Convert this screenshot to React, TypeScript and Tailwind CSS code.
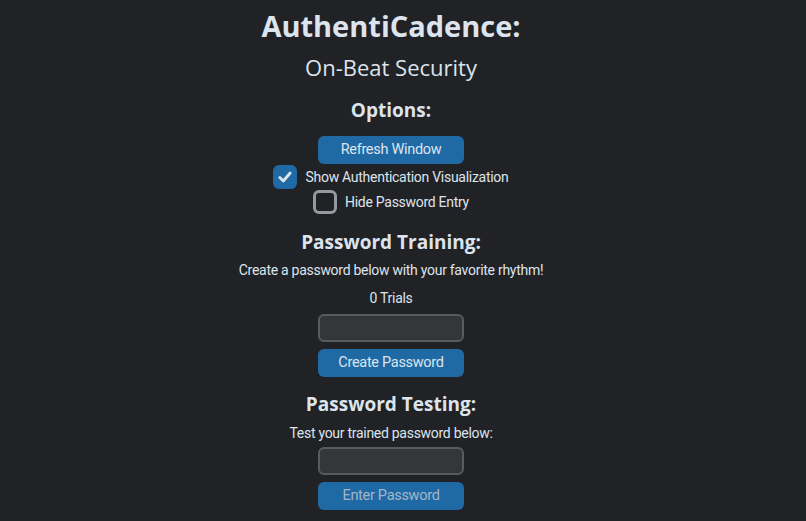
import React, { useState } from "react";

const heading = { fontFamily: '"Open Sans", "Noto Sans", sans-serif' };
const body = { fontFamily: 'Roboto, "Liberation Sans", sans-serif' };

function CheckBox({ checked, label, onToggle }: { checked: boolean; label: string; onToggle: () => void }) {
  return (
    <button type="button" onClick={onToggle} className="flex h-6 items-center gap-2" style={body}>
      {checked ? (
        <span className="flex h-6 w-6 items-center justify-center rounded-[6px] bg-[#1f6aa5]">
          <svg width="16" height="16" viewBox="0 0 16 16" fill="none">
            <path d="M2.8 8.6 L6.3 12 L13.2 4" stroke="#dce4ee" strokeWidth="2.8" strokeLinecap="round" strokeLinejoin="round" />
          </svg>
        </span>
      ) : (
        <span className="h-6 w-6 rounded-[6px] border-[3px] border-[#949a9f]" />
      )}
      <span className="text-[14px] leading-5 tracking-[-0.28px] text-[#dce4ee]">{label}</span>
    </button>
  );
}

function Entry() {
  return (
    <input
      type="password"
      className="h-7 w-[146px] rounded-[6px] border-2 border-[#565b5e] bg-[#343638] px-2 text-[14px] text-[#dce4ee] outline-none"
      style={body}
    />
  );
}

function ActionButton({ label, disabled }: { label: string; disabled?: boolean }) {
  return (
    <button
      type="button"
      className={
        disabled
          ? "h-7 w-[146px] rounded-[6px] bg-[#1f6aa5] text-[14.5px] leading-7 tracking-[-0.3px] text-[#a3b6c8]"
          : "h-7 w-[146px] rounded-[6px] bg-[#1f6aa5] text-[14.5px] leading-7 tracking-[-0.3px] text-[#dce4ee]"
      }
      style={body}
    >
      {label}
    </button>
  );
}

export default function App() {
  const [showViz, setShowViz] = useState(true);
  const [hidePw, setHidePw] = useState(false);

  return (
    <div className="min-h-[521px] w-full bg-[#212225] pr-6">
      <div className="flex flex-col items-center pt-[9px] text-[#dce4ee]">
        <h1 className="text-[29px] font-bold leading-[34px]" style={heading}>
          AuthentiCadence:
        </h1>
        <h2 className="mt-[10px] text-[22px] leading-[28px]" style={heading}>
          On-Beat Security
        </h2>
        <h3 className="mt-[17px] text-[19px] font-bold leading-6" style={heading}>
          Options:
        </h3>
        <div className="mt-[14px]">
          <ActionButton label="Refresh Window" />
        </div>
        <div className="mt-px">
          <CheckBox checked={showViz} label="Show Authentication Visualization" onToggle={() => setShowViz(!showViz)} />
        </div>
        <div className="mt-px">
          <CheckBox checked={hidePw} label="Hide Password Entry" onToggle={() => setHidePw(!hidePw)} />
        </div>

        <h3 className="mt-[15px] text-[19px] font-bold leading-[26px]" style={heading}>
          Password Training:
        </h3>
        <p className="mt-[5px] text-[14px] leading-5 tracking-[-0.28px]" style={body}>
          Create a password below with your favorite rhythm!
        </p>
        <p className="mt-2 text-[14px] leading-5 tracking-[-0.28px]" style={body}>
          0 Trials
        </p>
        <div className="mt-[6px]">
          <Entry />
        </div>
        <div className="mt-[7px]">
          <ActionButton label="Create Password" />
        </div>

        <h3 className="mt-[14px] text-[19px] font-bold leading-[26px]" style={heading}>
          Password Testing:
        </h3>
        <p className="mt-[6px] text-[14px] leading-5 tracking-[-0.28px]" style={body}>
          Test your trained password below:
        </p>
        <div className="mt-1">
          <Entry />
        </div>
        <div className="mt-[7px]">
          <ActionButton label="Enter Password" disabled />
        </div>
      </div>
    </div>
  );
}
